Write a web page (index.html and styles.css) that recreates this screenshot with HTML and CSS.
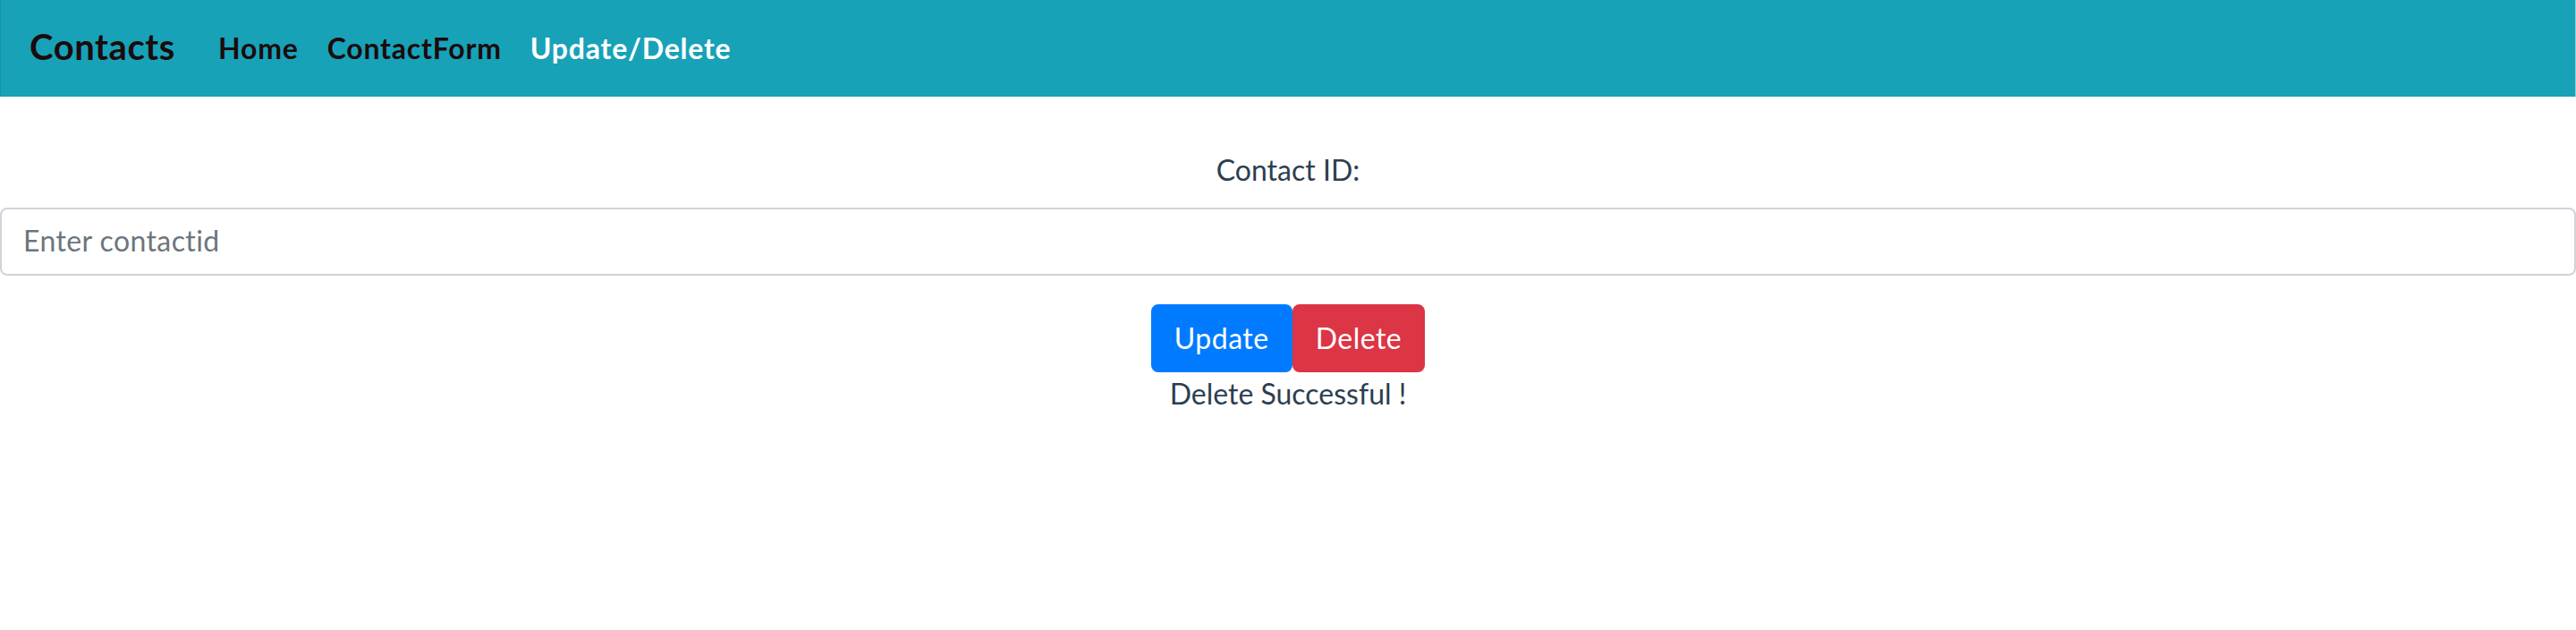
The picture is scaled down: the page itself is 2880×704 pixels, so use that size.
FILE: index.html
```html
<!DOCTYPE html>
<html lang="en">
<head>
<meta charset="utf-8">
<title>Contacts</title>
<link rel="stylesheet" href="styles.css">
</head>
<body>
<div class="app">
  <nav class="navbar">
    <a class="brand" href="#">Contacts</a>
    <ul class="nav">
      <li><a class="nav-link" href="#">Home</a></li>
      <li><a class="nav-link" href="#">ContactForm</a></li>
      <li><a class="nav-link active" href="#">Update/Delete</a></li>
    </ul>
  </nav>
  <main class="content">
    <form class="form">
      <label class="label" for="cid">Contact ID:</label>
      <input class="input" id="cid" type="text" placeholder="Enter contactid">
      <div class="actions">
        <button type="button" class="btn btn-primary">Update</button><button type="button" class="btn btn-danger">Delete</button>
      </div>
    </form>
    <p class="message">Delete Successful !</p>
  </main>
</div>
</body>
</html>
```
FILE: styles.css
```css
* { box-sizing: border-box; }
html, body { margin: 0; padding: 0; background: #fff; }
body {
  font-family: Lato, "Open Sans", "Liberation Sans", sans-serif;
  font-size: 32px;
  line-height: 1.5;
  color: #2c3e50;
}
.app { text-align: center; }

.navbar {
  height: 108px;
  background: #17a2b8;
  display: flex;
  align-items: center;
  padding: 0 32px;
  border-left: 1px solid #1595a9;
  border-right: 1px solid #8ccfda;
}
.brand {
  font-size: 40px;
  font-weight: 700;
  letter-spacing: 0.6px;
  color: #1c0b0c;
  text-decoration: none;
  margin-right: 32px;
  line-height: 1.5;
  position: relative;
  top: -2px;
}
.nav {
  display: flex;
  list-style: none;
  margin: 0;
  padding: 0;
}
.nav-link {
  display: block;
  padding: 0 16px;
  font-size: 32px;
  font-weight: 700;
  letter-spacing: 0.8px;
  color: #1c0b0c;
  text-decoration: none;
}
.nav-link.active { color: #fff; }

.content { padding-top: 58px; }
.form { margin: 0; }
.label {
  display: block;
  margin-bottom: 18px;
}
.input {
  display: block;
  width: 100%;
  height: 76px;
  padding: 0 24px 4px;
  font-family: inherit;
  font-size: 32px;
  letter-spacing: 0.4px;
  color: #495057;
  background: #fff;
  border: 2px solid #ced4da;
  border-radius: 8px;
  outline: none;
}
.input::placeholder { color: #6c757d; opacity: 1; }

.actions {
  display: flex;
  justify-content: center;
  margin-top: 32px;
}
.btn {
  height: 76px;
  padding: 0 24px 2px;
  font-family: inherit;
  font-size: 32px;
  letter-spacing: 0.5px;
  color: #fff;
  border: 2px solid transparent;
  border-radius: 8px;
  cursor: pointer;
}
.btn-primary { background: #007bff; border-color: #007bff; }
.btn-danger { background: #dc3545; border-color: #dc3545; }

.message { margin: 0; }
```
